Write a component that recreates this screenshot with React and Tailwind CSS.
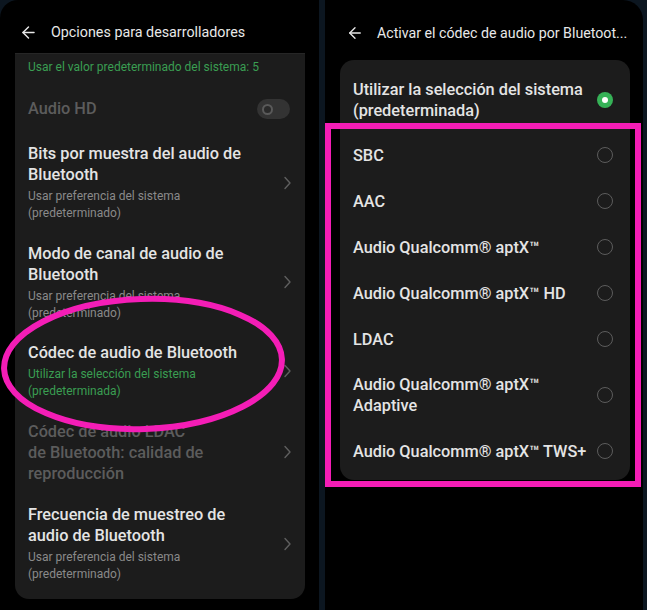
import { ArrowLeft } from "lucide-react";

const font = { fontFamily: "Roboto, 'Noto Sans', sans-serif" };

function Chevron() {
  return (
    <svg width="9" height="14" viewBox="0 0 9 14" className="shrink-0">
      <polyline points="2,1.5 7,7 2,12.5" fill="none" stroke="#5f5f5f" strokeWidth="1.4" strokeLinecap="round" strokeLinejoin="round" />
    </svg>
  );
}

function Radio({ on }) {
  if (on) {
    return (
      <div className="w-4 h-4 rounded-full bg-[#36b257] flex items-center justify-center shrink-0">
        <div className="w-[6px] h-[6px] rounded-full bg-white" />
      </div>
    );
  }
  return <div className="w-4 h-4 rounded-full border-[1.3px] border-[#5c5c5c] shrink-0" />;
}

function NavRow({ title, sub, green, disabled }) {
  return (
    <div className="flex items-center pl-[13px] pr-[13px] pt-[10px] pb-[10.5px]">
      <div className="flex-1">
        <div className={`text-[16.3px] leading-[21px] font-medium ${disabled ? "text-[#5c5c5c]" : "text-[#e4e4e4]"}`}>
          {title.map((t, i) => (
            <div key={i}>{t}</div>
          ))}
        </div>
        {sub && (
          <div className={`mt-[3px] text-[12px] leading-[17px] ${green ? "text-[#3a9e52]" : "text-[#8a8a8a]"}`}>
            {sub.map((t, i) => (
              <div key={i}>{t}</div>
            ))}
          </div>
        )}
      </div>
      <Chevron />
    </div>
  );
}

const codecs = [
  ["SBC"],
  ["AAC"],
  ["Audio Qualcomm® aptX™"],
  ["Audio Qualcomm® aptX™ HD"],
  ["LDAC"],
  ["Audio Qualcomm® aptX™", "Adaptive"],
  ["Audio Qualcomm® aptX™ TWS+"],
];

export default function App() {
  return (
    <div className="w-[647px] h-[610px] bg-[#0c1620] flex overflow-hidden" style={font}>
      {/* Left screen */}
      <div className="relative w-[319px] h-full bg-black rounded-tl-[18px] flex flex-col">
        <div className="h-[53px] flex items-center pl-[19px] pt-[12px]">
          <ArrowLeft size={19} strokeWidth={1.8} className="text-[#e8e8e8]" />
          <span className="ml-[13px] text-[14.3px] text-[#e8e8e8]">Opciones para desarrolladores</span>
        </div>
        <div className="mx-[15px] w-[290px] bg-[#1c1c1c] rounded-b-[14px] flex flex-col border-t border-[#262626]">
          <div className="pl-[13px] pt-[5px] pb-[10px] text-[12px] leading-[16px] text-[#3a9e52]">
            Usar el valor predeterminado del sistema: 5
          </div>
          <div className="h-[48px] flex items-center justify-between pl-[13px] pr-[15px]">
            <span className="text-[16.3px] font-medium text-[#5c5c5c]">Audio HD</span>
            <div className="w-[33px] h-[20px] rounded-full bg-[#333333] flex items-center pl-[5px]">
              <div className="w-[11px] h-[11px] rounded-full border-[2px] border-[#5a5a5a] bg-[#2a2a2a]" />
            </div>
          </div>
          <NavRow title={["Bits por muestra del audio de", "Bluetooth"]} sub={["Usar preferencia del sistema", "(predeterminado)"]} />
          <NavRow title={["Modo de canal de audio de", "Bluetooth"]} sub={["Usar preferencia del sistema", "(predeterminado)"]} />
          <NavRow title={["Códec de audio de Bluetooth"]} sub={["Utilizar la selección del sistema", "(predeterminada)"]} green />
          <NavRow title={["Códec de audio LDAC", "de Bluetooth: calidad de", "reproducción"]} disabled />
          <div className="pb-[5px]">
            <NavRow title={["Frecuencia de muestreo de", "audio de Bluetooth"]} sub={["Usar preferencia del sistema", "(predeterminado)"]} />
          </div>
        </div>
        {/* highlight ellipse */}
        <svg className="absolute left-0 top-0 pointer-events-none" width="319" height="610">
          <ellipse cx="143" cy="364" rx="139" ry="65" fill="none" stroke="#f41db6" strokeWidth="6" transform="rotate(-2 143 364)" />
        </svg>
      </div>

      <div className="w-[6px]" />

      {/* Right screen */}
      <div className="relative w-[318px] h-full bg-black rounded-tr-[20px] flex flex-col">
        <div className="h-[60px] flex items-start pl-[21px] pt-[23px]">
          <ArrowLeft size={18} strokeWidth={1.8} className="text-[#e8e8e8] mt-[1px]" />
          <span className="ml-[13px] text-[14.2px] leading-[20px] text-[#e8e8e8] whitespace-nowrap">
            Activar el códec de audio por Bluetoot...
          </span>
        </div>
        <div className="mx-[15px] w-[290px] bg-[#1c1c1c] rounded-[14px] flex flex-col pb-[6px]">
          <div className="h-[72px] flex items-center pl-[13px] pr-[17px] pt-[8px]">
            <div className="flex-1 text-[16.3px] leading-[21px] font-medium text-[#e4e4e4]">
              <div>Utilizar la selección del sistema</div>
              <div>(predeterminada)</div>
            </div>
            <Radio on />
          </div>
          {codecs.map((c, i) => (
            <div key={i} className={`${c.length > 1 ? "h-[66px]" : "h-[46px]"} flex items-center pl-[13px] pr-[17px]`}>
              <div className="flex-1 text-[16.3px] leading-[21px] font-medium text-[#e4e4e4] whitespace-nowrap">
                {c.map((t, j) => (
                  <div key={j}>{t}</div>
                ))}
              </div>
              <Radio />
            </div>
          ))}
        </div>
        {/* highlight rectangle */}
        <div className="absolute left-0 top-[123px] w-[316px] h-[364px] border-[6px] border-[#f41db6] pointer-events-none" />
      </div>
      <div className="flex-1" />
    </div>
  );
}
